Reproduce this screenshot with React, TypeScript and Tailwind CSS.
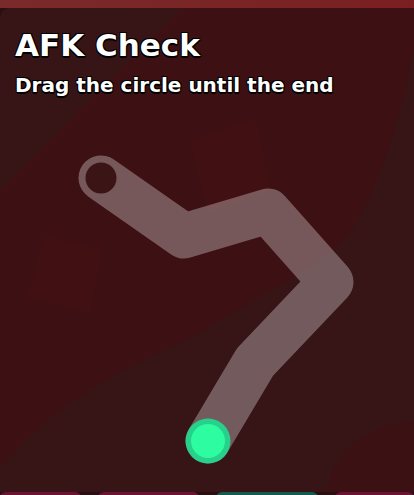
const outline =
  "[text-shadow:_-1px_-1px_0_#000,_1px_-1px_0_#000,_-1px_1px_0_#000,_1px_1px_0_#000,_0_2px_0_#000]"

// centre line of the track, in panel coordinates (panel starts 8px down)
const track = [
  [101, 170],
  [184, 228],
  [268, 203],
  [331, 274],
  [255, 354],
  [208, 433],
]

function Backdrop() {
  return (
    <svg className="absolute inset-0 h-full w-full" viewBox="0 0 414 484" preserveAspectRatio="none">
      <rect width="414" height="484" fill="#371517" />
      <path
        d="M0 182 L182 0 L414 0 L414 40 C405 90 385 170 352 222 C320 262 260 285 200 325 C130 360 70 380 0 460 Z"
        fill="#3d1113"
      />
      <polygon points="190,132 255,110 272,182 208,204" fill="#411012" />
      <polygon points="45,227 103,242 90,305 27,290" fill="#411012" />
      <ellipse cx="414" cy="492" rx="88" ry="78" fill="#3c1114" />
    </svg>
  )
}

function Track() {
  const pts = track.map(([x, y]) => `${x},${y}`).join(" ")
  const [sx, sy] = track[0]
  const [ex, ey] = track[track.length - 1]
  return (
    <svg className="absolute inset-0 h-full w-full" viewBox="0 0 414 484">
      <polyline
        points={pts}
        fill="none"
        stroke="rgba(255,255,255,0.3)"
        strokeWidth="45"
        strokeLinecap="round"
        strokeLinejoin="round"
      />
      <circle cx={sx} cy={sy} r="15.5" fill="#3b1416" />
      <circle cx={ex} cy={ey} r="22.5" fill="#27d08b" />
      <circle cx={ex} cy={ey} r="17" fill="#2dfca0" />
    </svg>
  )
}

export default function App() {
  return (
    <div className="flex h-[495px] w-[414px] flex-col overflow-hidden bg-[#2a0f12] font-['DejaVu_Sans',sans-serif]">
      <div className="h-2 shrink-0 bg-gradient-to-r from-[#7a2a2a] to-[#7a1f21]" />
      <div className="relative h-[484px] shrink-0 overflow-hidden rounded-tl-[10px]">
        <Backdrop />
        <Track />
        <div className="relative px-[15px] pt-[16px]">
          <h1 className={`text-[31px] leading-[42px] font-bold text-white ${outline}`}>
            AFK Check
          </h1>
          <p className={`mt-[6px] text-[20px] leading-[26px] font-bold text-white ${outline}`}>
            Drag the circle until the end
          </p>
        </div>
      </div>
      <div className="flex shrink-0 gap-[17px]">
        <div className="h-3 w-[82px] rounded-t-md bg-[#6b1333]" />
        <div className="h-3 w-[102px] rounded-t-md bg-[#6b1333]" />
        <div className="h-3 w-[103px] rounded-t-md bg-[#155a50]" />
        <div className="h-3 w-[80px] rounded-t-md bg-[#6b1333]" />
      </div>
    </div>
  )
}
